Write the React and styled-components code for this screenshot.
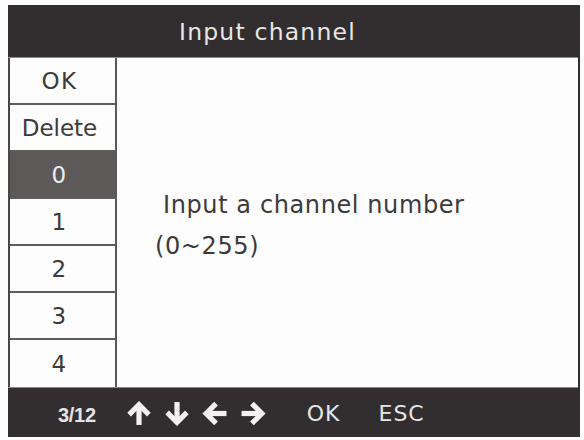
import React from "react";
import styled, { createGlobalStyle } from "styled-components";

const Global = createGlobalStyle`
  html, body { margin: 0; padding: 0; background: #fdfdfd; }
  body { font-family: "DejaVu Sans", "Liberation Sans", Arial, sans-serif; }
`;

const DARK = "#322e2f";

const Frame = styled.div`
  margin: 5px 0 0 8px;
  width: 572px;
  height: 432px;
  background: ${DARK};
  display: grid;
  grid-template-rows: 52px 1fr 49px;
  box-sizing: border-box;
`;

const Header = styled.div`
  display: flex;
  align-items: center;
  padding-left: 171px;
  color: #e8e6e6;
  font-size: 23.5px;
  letter-spacing: 1.2px;
  padding-top: 1px;
`;

const Body = styled.div`
  display: grid;
  grid-template-columns: 109px 1fr;
  margin: 0 2px 0 0;
  background: #fdfdfd;
  border-top: 1px solid #8a8888;
  border-bottom: 1px solid #8a8888;
`;

const List = styled.div`
  display: grid;
  grid-template-rows: repeat(7, 1fr);
  border-left: 2px solid #4a4747;
  border-right: 2px solid #5a5858;
`;

const Item = styled.div`
  display: flex;
  align-items: center;
  justify-content: center;
  padding-right: 6px;
  font-size: 23px;
  letter-spacing: ${(p) => (p.$wide ? "0px" : "1.5px")};
  color: ${(p) => (p.$active ? "#efeded" : "#3c3a3a")};
  background: ${(p) => (p.$active ? "#5d5959" : "transparent")};
  border-bottom: ${(p) => (p.$last ? "none" : "2px solid #5e5c5c")};
`;

const Content = styled.div`
  display: flex;
  flex-direction: column;
  justify-content: center;
  padding: 6px 0 0 38px;
  color: #3c3a3a;
  font-size: 24px;
  letter-spacing: 0.6px;
`;

const Line = styled.div`
  line-height: 41px;
  padding-left: ${(p) => p.$indent || 0}px;
`;

const Footer = styled.div`
  display: flex;
  align-items: center;
  padding-left: 50px;
  color: #e6e4e4;
  padding-top: 1px;
`;

const Page = styled.span`
  font-family: "Liberation Sans", Arial, sans-serif;
  font-weight: bold;
  font-size: 20px;
  letter-spacing: -0.3px;
  margin-right: 29px;
  padding-top: 4px;
`;

const Arrows = styled.div`
  display: flex;
  align-items: center;
  gap: 10px;
  margin-right: 40px;
`;

const Key = styled.span`
  font-size: 22px;
  letter-spacing: 1px;
  margin-right: ${(p) => p.$mr || 0}px;
`;

const ArrowSvg = styled.svg`
  width: 28px;
  height: 25px;
  display: block;
`;

const Arrow = ({ dir }) => {
  const rot = { up: 0, right: 90, down: 180, left: 270 }[dir];
  return (
    <ArrowSvg viewBox="0 0 24 24">
      <g transform={`rotate(${rot} 12 12)`} fill="none" stroke="#f2f0f0" strokeWidth="5" strokeLinejoin="miter">
        <path d="M12 23 V4" />
        <path d="M2.5 13 L12 3.5 L21.5 13" />
      </g>
    </ArrowSvg>
  );
};

const items = ["OK", "Delete", "0", "1", "2", "3", "4"];

export default function App() {
  return (
    <>
      <Global />
      <Frame>
        <Header>Input channel</Header>
        <Body>
          <List>
            {items.map((t, i) => (
              <Item key={t} $active={t === "0"} $last={i === items.length - 1} $wide={t === "Delete"}>
                {t}
              </Item>
            ))}
          </List>
          <Content>
            <Line $indent={8}>Input a channel number</Line>
            <Line>(0~255)</Line>
          </Content>
        </Body>
        <Footer>
          <Page>3/12</Page>
          <Arrows>
            <Arrow dir="up" />
            <Arrow dir="down" />
            <Arrow dir="left" />
            <Arrow dir="right" />
          </Arrows>
          <Key $mr={38}>OK</Key>
          <Key>ESC</Key>
        </Footer>
      </Frame>
    </>
  );
}
